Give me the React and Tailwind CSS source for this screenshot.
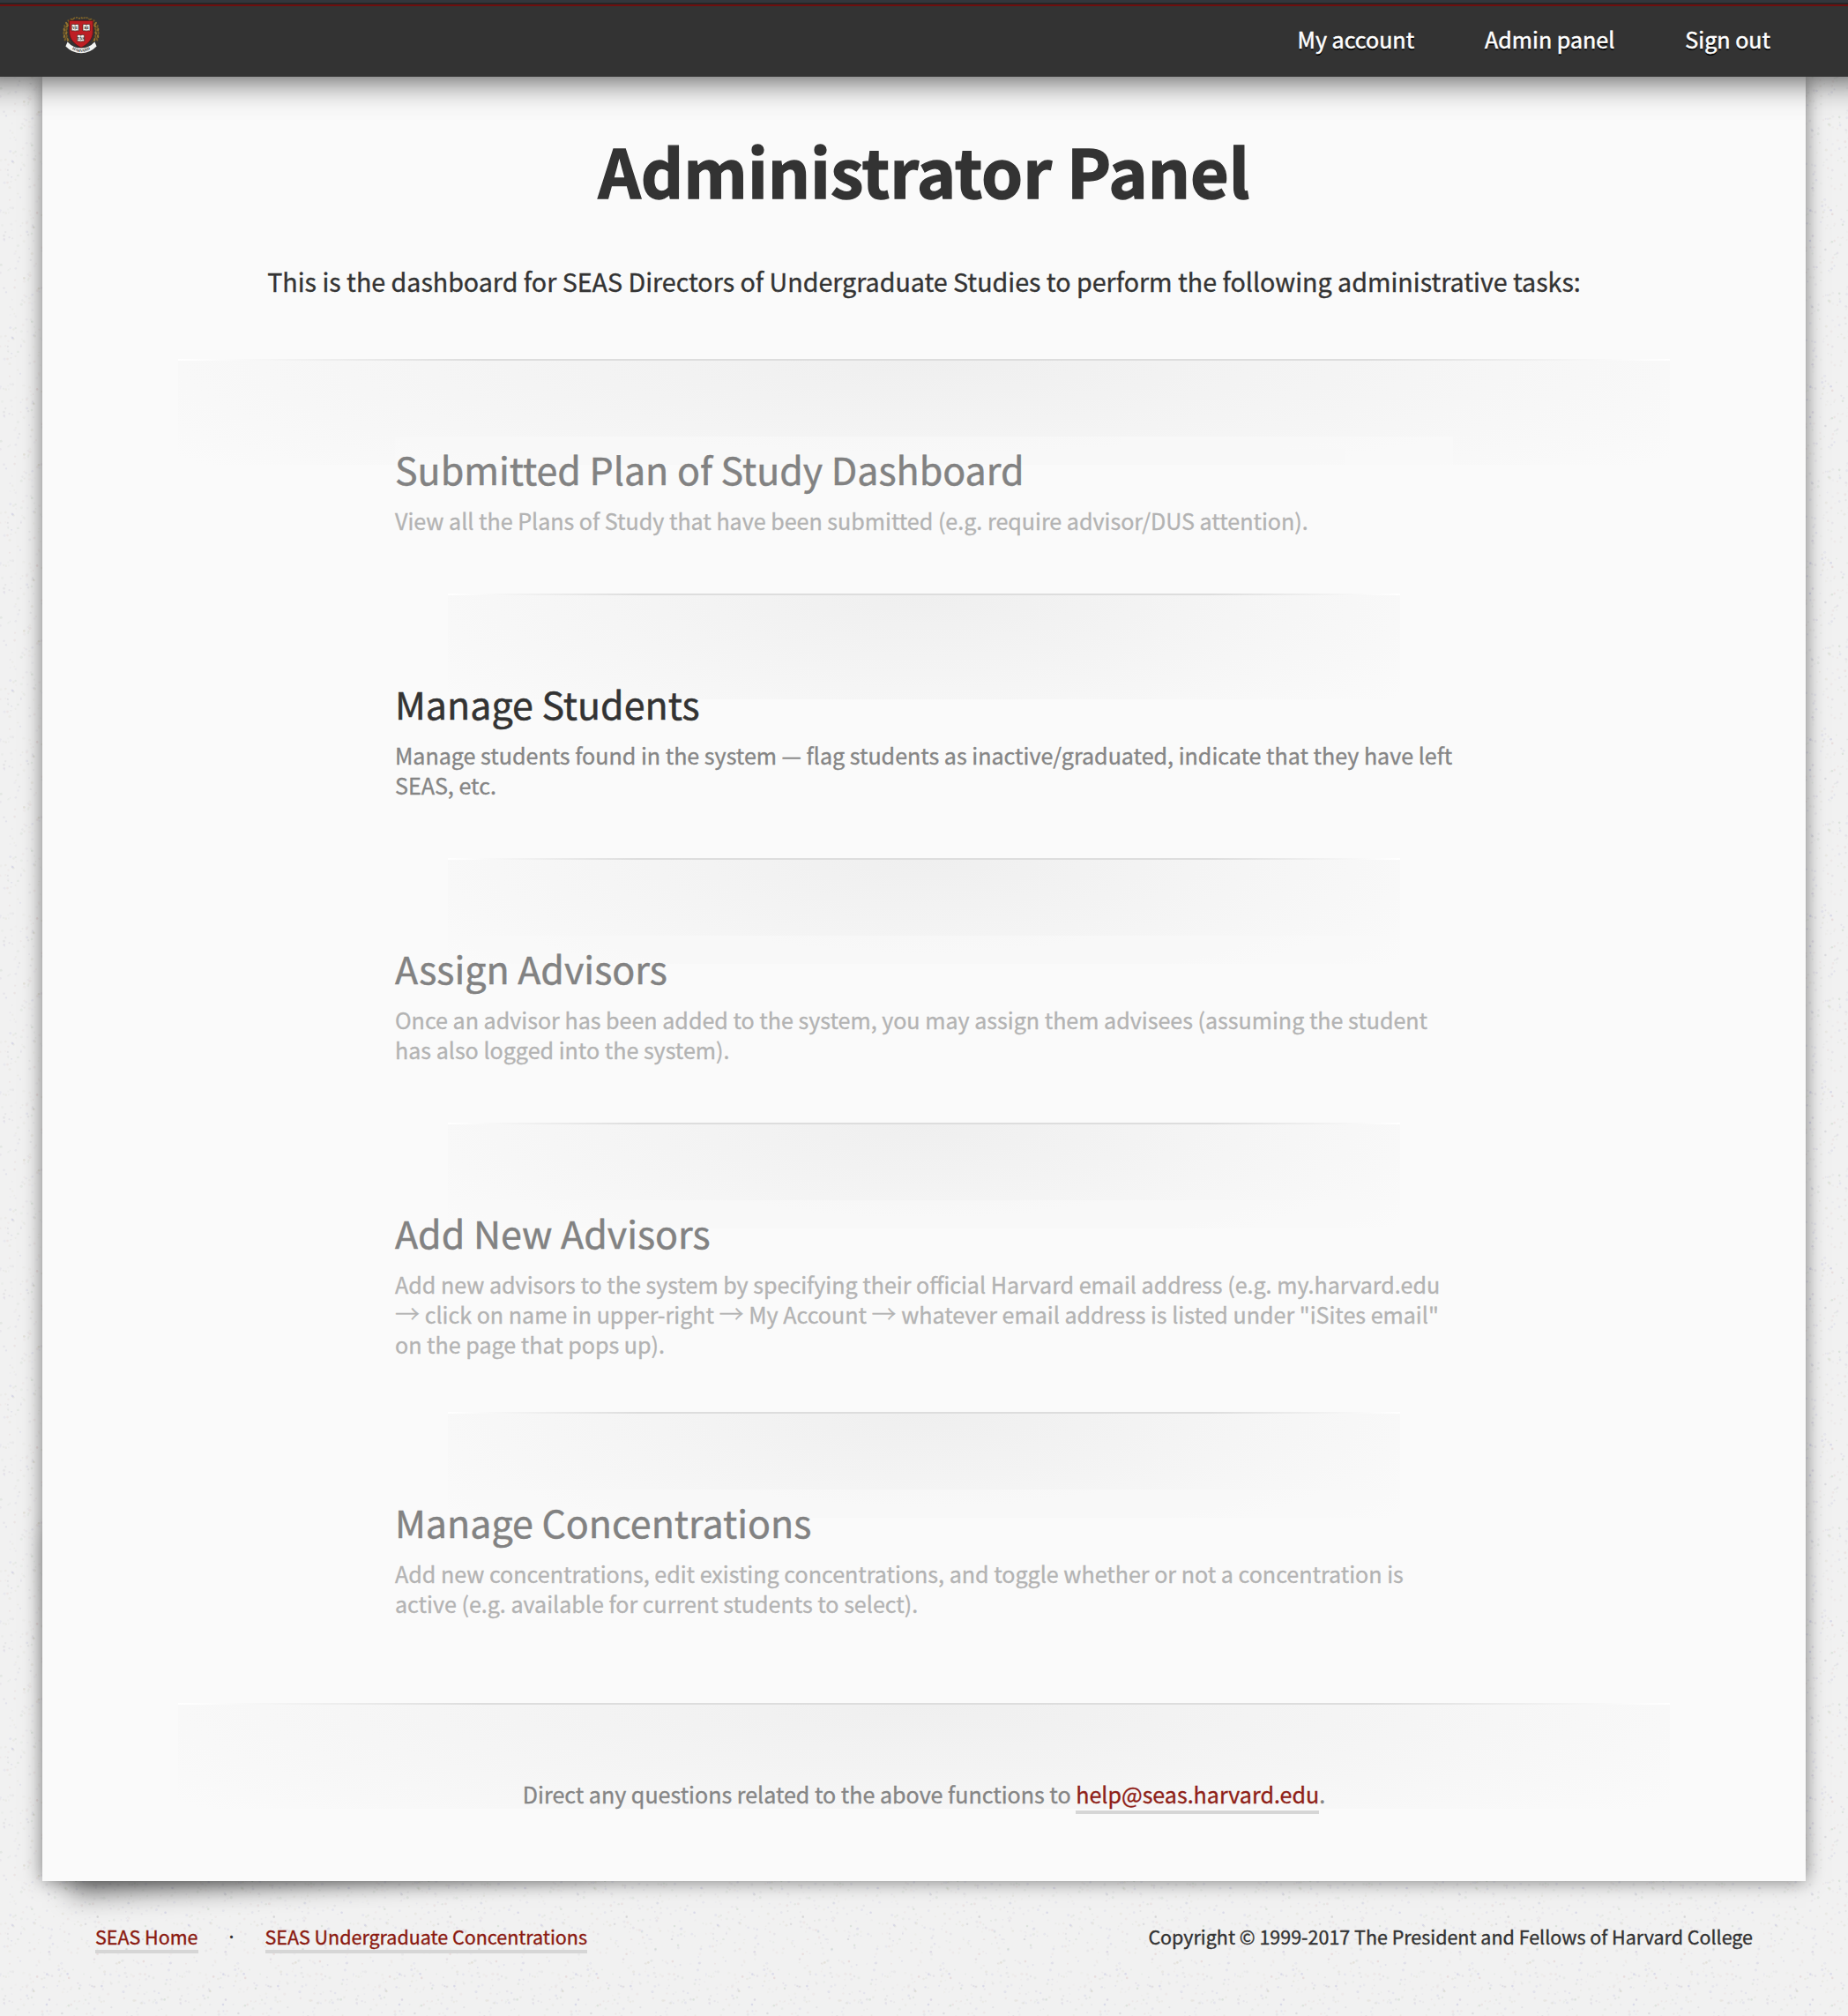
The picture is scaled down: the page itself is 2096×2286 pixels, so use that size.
import React from "react";

// Small seeded generator so the paper grain is the same on each render.
function makeSpecks(count, size) {
  let seed = 7321;
  const next = () => {
    seed = (seed * 16807) % 2147483647;
    return seed / 2147483647;
  };
  const tints = ["#9a9ad0", "#cfa8a8", "#a4bda4", "#a79bc0", "#bcb79a", "#a5a5b0"];
  return Array.from({ length: count }, () => {
    const strong = next() > 0.94;
    return {
      x: next() * size,
      y: next() * size,
      r: strong ? 1.3 : 0.9 + next() * 0.7,
      o: strong ? 0.28 : 0.06 + next() * 0.12,
      c: tints[Math.floor(next() * tints.length)],
    };
  });
}

const specks = makeSpecks(600, 200);

function PaperTexture() {
  return (
    <svg className="absolute inset-0 -z-10 h-full w-full" aria-hidden="true">
      <defs>
        <pattern id="paper" width="200" height="200" patternUnits="userSpaceOnUse">
          <rect width="200" height="200" fill="#f1f1f1" />
          {specks.map((s, i) => (
            <circle key={i} cx={s.x} cy={s.y} r={s.r} fill={s.c} opacity={s.o} />
          ))}
        </pattern>
      </defs>
      <rect width="100%" height="100%" fill="url(#paper)" />
    </svg>
  );
}

function Book({ x, y, label }) {
  return (
    <g transform={`translate(${x} ${y})`}>
      <path d="M0 .8Q2 0 4 .9Q6 0 8 .8V8Q6 7.4 4 8.2Q2 7.4 0 8Z" fill="#f3f1ec" stroke="#2a1a14" strokeWidth=".6" />
      <path d="M4 1V8" stroke="#77706a" strokeWidth=".5" />
      <text x="4" y="6.2" textAnchor="middle" fontSize="4.6" fontWeight="700" fontFamily="Liberation Serif, serif" fill="#222">
        {label}
      </text>
    </g>
  );
}

const leaves = [
  [7.2, 4.8, -50], [4.6, 7.6, -35], [2.6, 11, -20], [1.8, 14.6, -8], [1.5, 18.4, 0], [1.9, 22.2, 10], [3, 25.6, 22],
  [5.4, 10.4, 30], [4.5, 14.4, 25], [4.3, 18.4, 20], [4.6, 22.4, 10], [5.8, 26, -10], [10.5, 3, -70],
];

function Crest() {
  return (
    <svg className="h-[42px] w-[42px]" viewBox="0 0 42 42" aria-label="Harvard">
      {[0, 1].map((side) => (
        <g key={side} transform={side ? "translate(42 0) scale(-1 1)" : undefined}>
          <path d="M9 29C2 24 2 10 9 4" fill="none" stroke="#5f4a1c" strokeWidth="1" />
          {leaves.map(([x, y, a], i) => (
            <ellipse key={i} cx={x} cy={y} rx="1.1" ry="2.1" transform={`rotate(${a} ${x} ${y})`} fill={i % 2 ? "#927230" : "#755b26"} />
          ))}
        </g>
      ))}
      <path d="M12 2.2Q16 -.2 19 2Q21 .2 23 2Q26 -.2 30 2.2" fill="none" stroke="#86682a" strokeWidth="1.6" strokeDasharray="2.2 .9" />
      <path d="M7.6 4.4H34.4V17C34.4 26 28 31.5 21 35C14 31.5 7.6 26 7.6 17Z" fill="#be1f24" stroke="#5d1013" strokeWidth=".8" />
      <Book x="10.2" y="8" label="VE" />
      <Book x="23" y="8" label="RI" />
      <Book x="16.6" y="20" label="TAS" />
      <path d="M5.6 28.4L3.4 33.4Q11 41.2 21 41.3Q31 41.2 38.6 33.4L36.4 28.4Q30 35.4 21 35.6Q12 35.4 5.6 28.4Z" fill="#f4f4f2" />
      <path id="ribbon-line" d="M7.4 34.2Q14 39.8 21 39.9Q28 39.8 34.6 34.2" fill="none" />
      <text fontSize="4.4" fontWeight="700" fontFamily="Liberation Serif, serif" fill="#333">
        <textPath href="#ribbon-line" startOffset="50%" textAnchor="middle">HARVARD</textPath>
      </text>
    </svg>
  );
}

function Rule({ wide }) {
  const glow = wide
    ? "bg-[radial-gradient(61%_165%_at_50%_0%,#efefef,#fafafa)]"
    : "bg-[radial-gradient(62%_165%_at_50%_0%,#efefef,#fafafa)]";
  return (
    <div
      className={`relative mx-auto h-[2px] bg-[linear-gradient(90deg,#ffffff_0%,#dddddd_20%,#dddddd_80%,#ffffff_100%)] ${wide ? "w-[1692px]" : "w-[1080px]"}`}
    >
      <div className={`absolute inset-x-0 top-full h-[118px] ${glow}`} />
    </div>
  );
}

function Arrow() {
  return <span className="inline-block h-[34px] align-top text-[28px] leading-[32px] font-light">→</span>;
}

const tasks = [
  {
    title: "Submitted Plan of Study Dashboard",
    lines: ["View all the Plans of Study that have been submitted (e.g. require advisor/DUS attention)."],
    space: "mb-[66px]",
  },
  {
    title: "Manage Students",
    active: true,
    lines: [
      "Manage students found in the system — flag students as inactive/graduated, indicate that they have left",
      "SEAS, etc.",
    ],
    space: "mb-[66px]",
  },
  {
    title: "Assign Advisors",
    lines: [
      "Once an advisor has been added to the system, you may assign them advisees (assuming the student",
      "has also logged into the system).",
    ],
    space: "mb-[66px]",
  },
  {
    title: "Add New Advisors",
    lines: [
      "Add new advisors to the system by specifying their official Harvard email address (e.g. my.harvard.edu",
      <>
        <Arrow /> click on name in upper-right <Arrow /> My Account <Arrow /> whatever email address is listed under "iSites email"
      </>,
      "on the page that pops up).",
    ],
    space: "mb-[60px]",
  },
  {
    title: "Manage Concentrations",
    lines: [
      "Add new concentrations, edit existing concentrations, and toggle whether or not a concentration is",
      "active (e.g. available for current students to select).",
    ],
    space: "mb-[96px]",
  },
];

function Task({ title, lines, active, space }) {
  return (
    <section className={`relative mx-auto mt-[86px] w-[1200px] pt-[10px] ${space} ${active ? "" : "bg-[#fafafa] opacity-60"}`}>
      <h2 className="text-[42.95px] leading-[52px] text-[#333] [-webkit-text-stroke:0.5px_currentColor]">{title}</h2>
      <div className="mt-4 text-[25.07px] text-[#858585]">
        {lines.map((line, i) => (
          <p key={i} className="h-[34px] leading-[34px] whitespace-nowrap">
            {line}
          </p>
        ))}
      </div>
    </section>
  );
}

export default function App() {
  return (
    <div className="relative isolate h-[2286px] w-full overflow-hidden font-['Noto_Sans_CJK_SC','Noto_Sans',sans-serif] text-[#333] [-webkit-text-stroke:0.35px_currentColor]">
      <PaperTexture />

      <header className="relative z-10 -mx-10 h-[87px] border-t-[3px] border-[#33363c] bg-[#333] shadow-[0_0_40px_rgba(0,0,0,0.8)]">
        <div className="h-[2px] bg-[#262626]" />
        <div className="h-[2px] bg-[#6e0f0f]" />
        <div className="flex h-[80px] justify-between pr-[128px] pl-[111px]">
          <a className="mt-3 block [-webkit-text-stroke:0]">
            <Crest />
          </a>
          <nav className="flex h-[76px] items-center gap-[80px] text-[25.05px] text-white [-webkit-text-stroke:0.5px_currentColor] [text-shadow:0_2px_0_#000]">
            <a>My account</a>
            <a>Admin panel</a>
            <a>Sign out</a>
          </nav>
        </div>
      </header>

      <div className="relative mx-12">
        <div className="absolute bottom-[30px] left-5 h-[409px] w-[600px] -rotate-3 shadow-[0_30px_30px_rgba(0,0,0,0.47)]" />
        <main className="relative h-[2046px] bg-[#fafafa] pt-[58px] shadow-[0_0_20px_rgba(0,0,0,0.5)]">
          <h1 className="text-center text-[75.3px] leading-[96px] font-bold [-webkit-text-stroke:1.4px_currentColor]">Administrator Panel</h1>
          <p className="mt-[58px] text-center text-[28.63px] leading-10">
            This is the dashboard for SEAS Directors of Undergraduate Studies to perform the following administrative tasks:
          </p>

          <div className="mt-[68px]">
            {tasks.map((task, i) => (
              <React.Fragment key={task.title}>
                <Rule wide={i === 0} />
                <Task {...task} />
              </React.Fragment>
            ))}
          </div>

          <Rule wide />
          <p className="relative mt-[84px] text-center text-[25.05px] leading-[34px] text-[#858585]">
            Direct any questions related to the above functions to{" "}
            <a className="inline-block h-[40px] border-b-4 border-[#d6d6d6] align-top leading-[34px] text-[#8f1f18]">help@seas.harvard.edu</a>.
          </p>
        </main>
      </div>

      <footer className="mt-12 flex justify-between px-[108px] text-[21.48px] leading-[30px]">
        <div className="flex">
          <a className="h-[34px] border-b-4 border-[#d6d6d6] text-[#8b1a10]">SEAS Home</a>
          <span className="w-[76px] text-center text-[15px] [-webkit-text-stroke:0]">·</span>
          <a className="h-[34px] border-b-4 border-[#d6d6d6] text-[#8b1a10]">SEAS Undergraduate Concentrations</a>
        </div>
        <p>Copyright © 1999-2017 The President and Fellows of Harvard College</p>
      </footer>
    </div>
  );
}
